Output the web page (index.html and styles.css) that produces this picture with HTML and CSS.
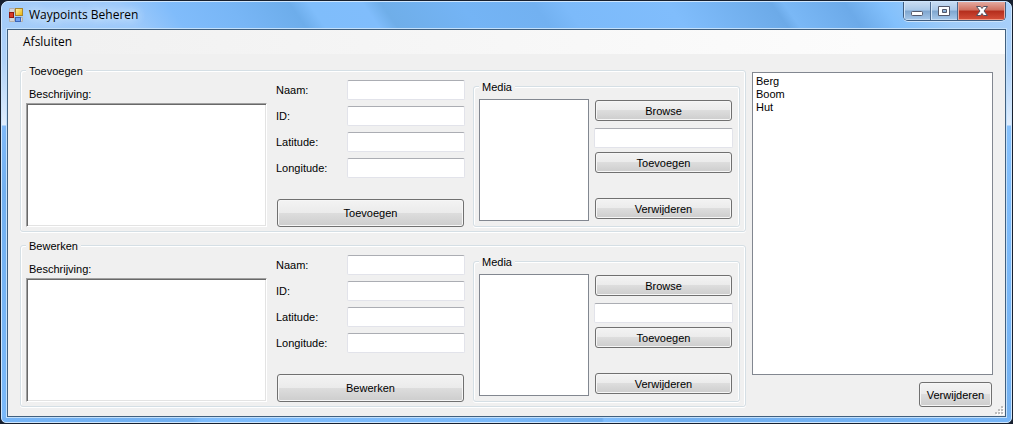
FILE: index.html
```html
<!DOCTYPE html>
<html lang="nl">
<head>
<meta charset="utf-8">
<title>Waypoints Beheren</title>
<link rel="stylesheet" href="styles.css">
</head>
<body>
<div class="window">
  <header class="titlebar">
    <svg class="app-icon" width="14" height="14" viewBox="0 0 14 14" aria-hidden="true">
      <defs>
        <linearGradient id="gold" x2="1" y2="1"><stop offset="0" stop-color="#fff3b0"/><stop offset="1" stop-color="#e8b000"/></linearGradient>
      </defs>
      <path d="M.5.5h5v4h-5zM.5 9.500h5v4h-5zM11.500 9.500h2v4h-2z" fill="#d5d5d8" stroke="#b5b0ab"/>
      <rect x="6.500" y=".5" width="7" height="7" fill="url(#gold)" stroke="#a8842a"/>
      <rect x=".5" y="4.500" width="4" height="5" fill="#d83a26" stroke="#8e1710"/>
      <rect x="6.500" y="9.500" width="5" height="4" fill="#6fa0f0" stroke="#3a65b8"/>
    </svg>
    <h1 class="title">Waypoints Beheren</h1>
    <div class="controls">
      <button class="control minimize" type="button" aria-label="Minimaliseren">
        <svg width="14" height="12" viewBox="0 0 14 12"><rect x="1.500" y="6.500" width="11" height="4" rx="1" fill="#fff" stroke="#54586a"/></svg>
      </button>
      <button class="control maximize" type="button" aria-label="Maximaliseren">
        <svg width="14" height="12" viewBox="0 0 14 12"><path d="M1.500 1.500h11v9h-11zM5.500 4.500v3h4v-3z" fill="#fff" fill-rule="evenodd" stroke="#54586a"/></svg>
      </button>
      <button class="control close" type="button" aria-label="Sluiten">
        <svg width="14" height="12" viewBox="0 0 14 12"><path d="M1.500 1.500h4L7 3.500l1.500-2h4L9 6l3.500 4.500h-4L7 8.500l-1.500 2h-4L5 6z" fill="#fff" stroke="#54505e"/></svg>
      </button>
    </div>
  </header>
  <div class="client">
    <nav class="menu"><button class="menu-item" type="button">Afsluiten</button></nav>
    <main class="content">
      <div class="forms">
        <fieldset class="group editor">
          <legend>Toevoegen</legend>
          <div class="description">
            <label for="add-description">Beschrijving:</label>
            <textarea id="add-description" class="memo"></textarea>
          </div>
          <div class="fields">
            <label for="add-name">Naam:</label><input class="text" id="add-name" type="text">
            <label for="add-id">ID:</label><input class="text" id="add-id" type="text">
            <label for="add-lat">Latitude:</label><input class="text" id="add-lat" type="text">
            <label for="add-lon">Longitude:</label><input class="text" id="add-lon" type="text">
            <button class="button submit" type="button">Toevoegen</button>
          </div>
          <fieldset class="group media">
            <legend>Media</legend>
            <select class="list" size="4" aria-label="Media"></select>
            <div class="media-actions">
              <button class="button" type="button">Browse</button>
              <input class="text" type="text" aria-label="Bestand">
              <button class="button" type="button">Toevoegen</button>
              <button class="button remove" type="button">Verwijderen</button>
            </div>
          </fieldset>
        </fieldset>
        <fieldset class="group editor">
          <legend>Bewerken</legend>
          <div class="description">
            <label for="edit-description">Beschrijving:</label>
            <textarea id="edit-description" class="memo"></textarea>
          </div>
          <div class="fields">
            <label for="edit-name">Naam:</label><input class="text" id="edit-name" type="text">
            <label for="edit-id">ID:</label><input class="text" id="edit-id" type="text">
            <label for="edit-lat">Latitude:</label><input class="text" id="edit-lat" type="text">
            <label for="edit-lon">Longitude:</label><input class="text" id="edit-lon" type="text">
            <button class="button submit" type="button">Bewerken</button>
          </div>
          <fieldset class="group media">
            <legend>Media</legend>
            <select class="list" size="4" aria-label="Media"></select>
            <div class="media-actions">
              <button class="button" type="button">Browse</button>
              <input class="text" type="text" aria-label="Bestand">
              <button class="button" type="button">Toevoegen</button>
              <button class="button remove" type="button">Verwijderen</button>
            </div>
          </fieldset>
        </fieldset>
      </div>
      <div class="waypoints">
        <select class="list" size="4" aria-label="Waypoints">
          <option>Berg</option>
          <option>Boom</option>
          <option>Hut</option>
        </select>
        <button class="button delete" type="button">Verwijderen</button>
      </div>
    </main>
    <svg class="grip" width="9" height="9" viewBox="0 0 9 9" aria-hidden="true">
      <path d="M7 1h2v2H7zM4 4h2v2H4zM7 4h2v2H7zM1 7h2v2H1zM4 7h2v2H4zM7 7h2v2H7z" fill="#fff"/>
      <path d="M6 0h2v2H6zM3 3h2v2H3zM6 3h2v2H6zM0 6h2v2H0zM3 6h2v2H3zM6 6h2v2H6z" fill="#bdbdbd"/>
    </svg>
  </div>
</div>
</body>
</html>
```

FILE: styles.css
```css
* {
  box-sizing: border-box;
}

body {
  margin: 0;
  padding: 1px;
  background: #17202f;
  color: #000;
  font: 11px/13px "Liberation Sans", Arial, sans-serif;
}

button,
input,
textarea,
select {
  margin: 0;
  color: inherit;
  font: inherit;
}

/* Window frame */
.window {
  display: flex;
  flex-direction: column;
  min-height: calc(100vh - 2px);
  padding: 0 5px 5px;
  border: 1px solid #cfe6fd;
  border-radius: 7px 7px 5px 5px;
  background:
    linear-gradient(55deg, #a5cdf9, #9ecafa 110px, #80bcfb 150px, #78b6f6 200px, #6dadeb 250px, #7fbdfb 266px, #80bdfc 310px, #6faee9 325px, #74b4f5 390px, #72b1f1 450px, #7cbafa 475px, #80bdfc 560px, #6caae8 645px, #7ab8f6 655px, #6caae9 705px, #82c0fc 735px, #9fcbf8 780px, #a9d0fa) top / 100% 27px no-repeat,
    linear-gradient(90deg, #76b5f7, #72b0f0 190px, #7fbdfd 200px, #7cbafa 500px, #6fadee 600px, #7fbdfd 602px, #72b0f0 680px, #76b5f7) bottom / 100% 5px no-repeat,
    linear-gradient(#a9cef8 26px, #b0d2f8 60px, #e0edfc 123px, #7fb9f8 124px, #72b0f0 190px, #7ab9fa) left / 5px 100% no-repeat,
    linear-gradient(#a9d0fa 26px, #a9d0fa 60px, #e0edfc 123px, #86c1fc 124px, #7ebcfb 200px, #72b0f0) right / 5px 100% no-repeat,
    #c3e0fb;
}

.titlebar {
  display: flex;
  align-items: flex-start;
  height: 27px;
}

.app-icon {
  margin: 6px 6px 0 2px;
}

.title {
  flex: 1;
  margin: 5px 0 0;
  font: 12px/16px "Open Sans", sans-serif;
  text-shadow: 0 0 8px #e9f4ff, 0 0 10px #d8eafd;
}

.controls {
  display: flex;
  height: 19px;
  overflow: hidden;
  border: 1px solid #3f5c7f;
  border-top: 0;
  border-radius: 0 0 5px 5px;
  box-shadow: 0 1px 0 #cfe5fb;
}

.control {
  display: flex;
  align-items: center;
  justify-content: center;
  width: 27px;
  padding: 0;
  border: 0;
  border-right: 1px solid #4c6a8f;
  background: linear-gradient(#c8dcf2, #aac8e8 45%, #7fa6cf 50%, #a7c8ea);
  box-shadow: inset 1px 0 #d3e5f7, inset 0 -1px #c4dbf3;
}

.close {
  width: 47px;
  border: 0;
  background: linear-gradient(#e4aaa0, #cf705f 45%, #b42d1c 50%, #d5503a);
  box-shadow: inset 1px 0 #eba99b, inset -1px 0 #eba99b, inset 0 -1px #f09884;
}

.client {
  position: relative;
  display: flex;
  flex: 1;
  flex-direction: column;
  border: 1px solid #41607f;
  background: #f0f0f0;
  box-shadow: 0 0 0 1px #c3e0fb;
}

.menu {
  display: flex;
  height: 24px;
  padding: 0 9px;
  background: linear-gradient(90deg, #f0f0f0, #fcfcfc 86%);
}

.menu-item {
  padding: 0 6px;
  border: 0;
  background: none;
  font: 12px/24px "Open Sans", sans-serif;
}

/* Form layout */
.content {
  display: grid;
  flex: 1;
  grid-template-columns: minmax(0, 1fr) 241px;
  gap: 6px;
  padding: 9px 12px 9px;
}

.forms {
  display: flex;
  flex-direction: column;
  gap: 6px;
}

.group {
  display: grid;
  min-width: 0;
  margin: 0;
  border: 1px solid #d5dfe5;
  border-radius: 3px;
  box-shadow: inset 1px 1px #fff, inset -1px 0 #fff, 0 1px #fff;
}

legend {
  padding: 2px 3px 0;
  background: #f0f0f0;
}

.editor {
  grid-template-columns: minmax(0, 1fr) 189px 275px;
  padding: 1px 5px 4px;
}

.description {
  display: flex;
  flex-direction: column;
  gap: 2px;
  margin-right: 9px;
  padding-top: 9px;
}

.description label {
  padding-left: 3px;
}

.memo {
  flex: 1;
  width: 100%;
  padding: 2px;
  border: 1px solid;
  border-color: #a0a0a0 #fff #fff #a0a0a0;
  border-radius: 0;
  background: #fff;
  box-shadow: inset 1px 1px #696969, inset -1px -1px #e3e3e3;
  resize: none;
}

.fields {
  display: grid;
  grid-template-columns: 71px minmax(0, 1fr);
  grid-template-rows: repeat(4, 20px) 1fr;
  gap: 6px 0;
  align-items: center;
  padding-top: 1px;
}

.text {
  width: 100%;
  height: 20px;
  padding: 2px;
  border: 1px solid #e2e3ea;
  border-top-color: #abadb3;
  border-radius: 2px;
  background: #fff;
}

.button {
  height: 21px;
  margin: 0 1px;
  padding: 1px 0 0;
  border: 1px solid #707070;
  border-radius: 3px;
  background: linear-gradient(#f3f3f3, #ebebeb 49%, #dddddd 50%, #cdcdcd);
  box-shadow: inset 0 0 0 1px #f6f6f6;
  white-space: nowrap;
}

.submit {
  grid-column: 1 / -1;
  align-self: end;
  height: 28px;
}

.media {
  grid-template-columns: minmax(0, 1fr) 139px;
  gap: 5px;
  margin-left: 8px;
  padding: 5px 6px 5px 5px;
}

.media-actions {
  display: flex;
  flex-direction: column;
  padding: 1px 0 2px;
}

.media-actions .text {
  margin: 7px 0 4px;
}

.remove {
  margin-top: 25px;
}

.list {
  min-height: 0;
  padding: 2px 0;
  overflow: hidden;
  border: 1px solid #828790;
  border-radius: 0;
  background: #fff;
}

.list option {
  min-height: 13px;
  padding: 0 3px;
  line-height: 13px;
}

.waypoints {
  display: flex;
  flex-direction: column;
  gap: 7px;
  padding-top: 9px;
}

.waypoints .list {
  flex: 1;
}

.delete {
  align-self: flex-end;
  width: 73px;
  height: 25px;
}

.grip {
  position: absolute;
  right: 1px;
  bottom: 1px;
}
```
